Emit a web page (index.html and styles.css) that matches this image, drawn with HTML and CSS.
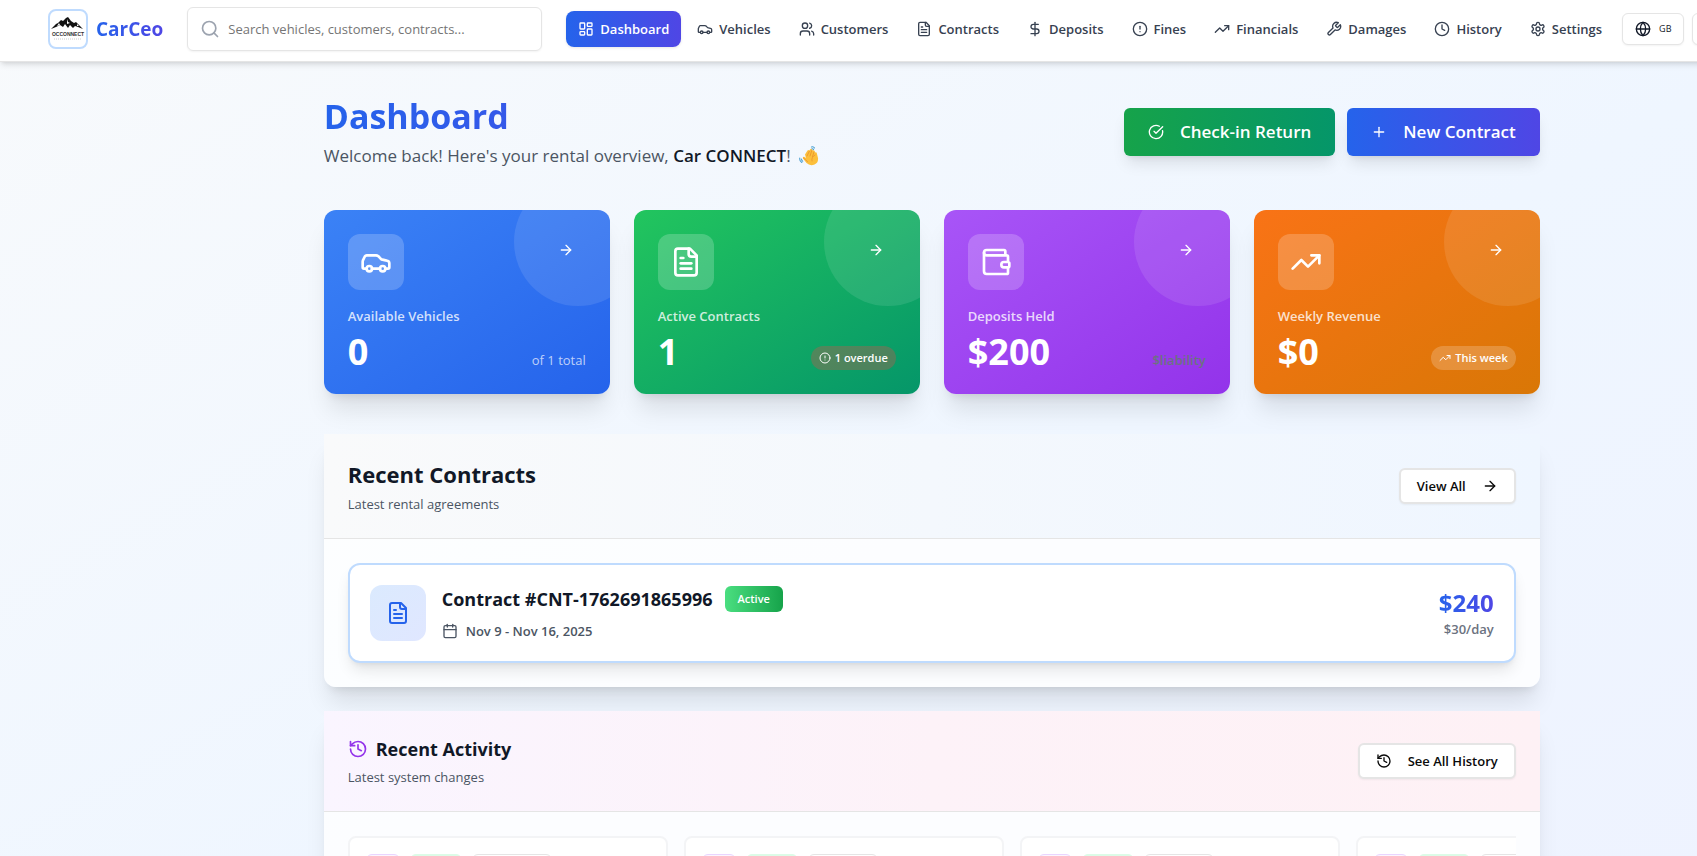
FILE: index.html
```html
<!DOCTYPE html>
<html lang="en">
<head>
  <meta charset="UTF-8" />
  <meta name="viewport" content="width=device-width, initial-scale=1" />
  <title>CarCeo - Dashboard</title>
  <link rel="stylesheet" href="styles.css">
</head>
<body>
  <!-- icon sprite -->
  <svg class="sprite" aria-hidden="true">
    <symbol id="i-search" viewBox="0 0 24 24"><circle cx="11" cy="11" r="8"/><path d="m21 21-4.3-4.3"/></symbol>
    <symbol id="i-dashboard" viewBox="0 0 24 24"><rect x="3" y="3" width="7" height="9" rx="1"/><rect x="14" y="3" width="7" height="5" rx="1"/><rect x="14" y="12" width="7" height="9" rx="1"/><rect x="3" y="16" width="7" height="5" rx="1"/></symbol>
    <symbol id="i-car" viewBox="0 0 24 24"><path d="M19 17h2c.6 0 1-.4 1-1v-3c0-.9-.7-1.7-1.5-1.9C18.700 10.600 16 10 16 10s-1.300-1.400-2.200-2.300c-.5-.4-1.100-.7-1.800-.7H5c-.6 0-1.100.4-1.400.9l-1.400 2.900A3.700 3.700 0 0 0 2 12v4c0 .6.4 1 1 1h2"/><circle cx="7" cy="17" r="2"/><path d="M9 17h6"/><circle cx="17" cy="17" r="2"/></symbol>
    <symbol id="i-users" viewBox="0 0 24 24"><path d="M16 21v-2a4 4 0 0 0-4-4H6a4 4 0 0 0-4 4v2"/><circle cx="9" cy="7" r="4"/><path d="M22 21v-2a4 4 0 0 0-3-3.870"/><path d="M16 3.130a4 4 0 0 1 0 7.750"/></symbol>
    <symbol id="i-file" viewBox="0 0 24 24"><path d="M15 2H6a2 2 0 0 0-2 2v16a2 2 0 0 0 2 2h12a2 2 0 0 0 2-2V7Z"/><path d="M14 2v4a2 2 0 0 0 2 2h4"/><path d="M10 9H8"/><path d="M16 13H8"/><path d="M16 17H8"/></symbol>
    <symbol id="i-dollar" viewBox="0 0 24 24"><path d="M12 2v20"/><path d="M17 5H9.500a3.500 3.500 0 0 0 0 7h5a3.500 3.500 0 0 1 0 7H6"/></symbol>
    <symbol id="i-alert" viewBox="0 0 24 24"><circle cx="12" cy="12" r="10"/><path d="M12 8v4"/><path d="M12 16h.01"/></symbol>
    <symbol id="i-trend" viewBox="0 0 24 24"><path d="m22 7-8.500 8.500-5-5L2 17"/><path d="M16 7h6v6"/></symbol>
    <symbol id="i-wrench" viewBox="0 0 24 24"><path d="M14.700 6.300a1 1 0 0 0 0 1.400l1.600 1.600a1 1 0 0 0 1.400 0l3.770-3.770a6 6 0 0 1-7.940 7.940l-6.910 6.910a2.120 2.120 0 0 1-3-3l6.910-6.910a6 6 0 0 1 7.940-7.940l-3.760 3.760z"/></symbol>
    <symbol id="i-clock" viewBox="0 0 24 24"><circle cx="12" cy="12" r="10"/><path d="M12 6v6l4 2"/></symbol>
    <symbol id="i-settings" viewBox="0 0 24 24"><path d="M12.220 2h-.44a2 2 0 0 0-2 2v.18a2 2 0 0 1-1 1.730l-.43.25a2 2 0 0 1-2 0l-.15-.08a2 2 0 0 0-2.730.73l-.22.38a2 2 0 0 0 .73 2.730l.15.1a2 2 0 0 1 1 1.720v.51a2 2 0 0 1-1 1.740l-.15.09a2 2 0 0 0-.73 2.730l.22.38a2 2 0 0 0 2.730.73l.15-.08a2 2 0 0 1 2 0l.43.25a2 2 0 0 1 1 1.730V20a2 2 0 0 0 2 2h.44a2 2 0 0 0 2-2v-.18a2 2 0 0 1 1-1.730l.43-.25a2 2 0 0 1 2 0l.15.08a2 2 0 0 0 2.730-.73l.22-.39a2 2 0 0 0-.73-2.730l-.15-.08a2 2 0 0 1-1-1.740v-.5a2 2 0 0 1 1-1.740l.15-.09a2 2 0 0 0 .73-2.730l-.22-.38a2 2 0 0 0-2.730-.73l-.15.08a2 2 0 0 1-2 0l-.43-.25a2 2 0 0 1-1-1.730V4a2 2 0 0 0-2-2z"/><circle cx="12" cy="12" r="3"/></symbol>
    <symbol id="i-globe" viewBox="0 0 24 24"><circle cx="12" cy="12" r="10"/><path d="M12 2a14.500 14.500 0 0 0 0 20 14.500 14.500 0 0 0 0-20"/><path d="M2 12h20"/></symbol>
    <symbol id="i-check" viewBox="0 0 24 24"><path d="M21.800 10A10 10 0 1 1 17 3.340"/><path d="m9 11 3 3L22 4"/></symbol>
    <symbol id="i-plus" viewBox="0 0 24 24"><path d="M5 12h14"/><path d="M12 5v14"/></symbol>
    <symbol id="i-arrow" viewBox="0 0 24 24"><path d="M5 12h14"/><path d="m12 5 7 7-7 7"/></symbol>
    <symbol id="i-wallet" viewBox="0 0 24 24"><path d="M19 7V4a1 1 0 0 0-1-1H5a2 2 0 0 0 0 4h15a1 1 0 0 1 1 1v4h-3a2 2 0 0 0 0 4h3a1 1 0 0 0 1-1v-2a1 1 0 0 0-1-1"/><path d="M3 5v14a2 2 0 0 0 2 2h15a1 1 0 0 0 1-1v-4"/></symbol>
    <symbol id="i-calendar" viewBox="0 0 24 24"><path d="M8 2v4"/><path d="M16 2v4"/><rect x="3" y="4" width="18" height="18" rx="2"/><path d="M3 10h18"/></symbol>
    <symbol id="i-history" viewBox="0 0 24 24"><path d="M3 12a9 9 0 1 0 9-9 9.750 9.750 0 0 0-6.740 2.740L3 8"/><path d="M3 3v5h5"/><path d="M12 7v5l4 2"/></symbol>
  </svg>

  <div class="page">
    <header class="topbar">
      <a class="brand" href="#">
        <svg class="brand-logo" viewBox="0 0 36 36" aria-hidden="true">
          <path d="M1 18 6 13l2-1 3-3 2 1 3-3 2-1 3 4 3 2 2-1 4 4 3 3-5-2-3-1-2 2-3-3-2 3-3-4-2 3-3-2-4 2z" fill="#111"/>
          <path d="m17 8 1 3 2 1-3 1zM9 12l1 2-3 1zM27 13l2 2-2 0z" fill="#fff"/>
          <text x="18" y="25" text-anchor="middle" class="logo-name">OCCONNECT</text>
          <path d="M4 28h28" stroke="#ccc" stroke-width="1" stroke-dasharray="1 1"/>
        </svg>
        <span class="brand-name">CarCeo</span>
      </a>

      <label class="search">
        <svg class="icon icon-md"><use href="#i-search"/></svg>
        <input type="text" placeholder="Search vehicles, customers, contracts..." aria-label="Search" />
      </label>

      <nav class="nav">
        <a class="active" href="#"><svg class="icon"><use href="#i-dashboard"/></svg>Dashboard</a>
        <a href="#"><svg class="icon"><use href="#i-car"/></svg>Vehicles</a>
        <a href="#"><svg class="icon"><use href="#i-users"/></svg>Customers</a>
        <a href="#"><svg class="icon"><use href="#i-file"/></svg>Contracts</a>
        <a href="#"><svg class="icon"><use href="#i-dollar"/></svg>Deposits</a>
        <a href="#"><svg class="icon"><use href="#i-alert"/></svg>Fines</a>
        <a href="#"><svg class="icon"><use href="#i-trend"/></svg>Financials</a>
        <a href="#"><svg class="icon"><use href="#i-wrench"/></svg>Damages</a>
        <a href="#"><svg class="icon"><use href="#i-clock"/></svg>History</a>
        <a href="#"><svg class="icon"><use href="#i-settings"/></svg>Settings</a>
      </nav>

      <div class="tools">
        <button class="tool-btn" type="button"><svg class="icon"><use href="#i-globe"/></svg>GB</button>
        <button class="tool-btn account" type="button" aria-label="Account"><svg class="icon"><use href="#i-users"/></svg></button>
      </div>
    </header>

    <main>
      <section class="intro">
        <div>
          <h1>Dashboard</h1>
          <p>Welcome back! Here's your rental overview, <strong>Car CONNECT</strong>!
            <svg class="wave" viewBox="0 0 20 20" role="img" aria-label="waving hand">
              <path d="M6 8.500 8.500 4.500q1.200-1.300 2 .2L11 3.500q1.200-1.500 2.200 0l.4 1q1.400-.9 2 .5l.3 1.500q1.700-.6 2 1L19 12q.5 5-3.500 6.500-4.500 1.800-8-1.500L4 12.500q-.6-1.600 1-1.700L7 12z" fill="#fcbf3b"/>
              <path d="m8 10 2.500-5M11 10l1.800-5.500M13.500 10.500l1.500-4.500M4.500 12l4 3.500M16 9q-4 2-3 6" fill="none" stroke="#e8912d" stroke-width=".8" stroke-linecap="round"/>
              <path d="M12.500 1q2-.8 3 1M13 2.800q1-.3 1.500.8M.8 12q-.5 3 2 4.500M2.500 13q0 1.500 1.200 2.200" fill="none" stroke="#4a9fd0" stroke-width="1.100" stroke-linecap="round"/>
            </svg>
          </p>
        </div>
        <div class="intro-actions">
          <button class="btn-lg green" type="button"><svg class="icon"><use href="#i-check"/></svg>Check-in Return</button>
          <button class="btn-lg blue" type="button"><svg class="icon"><use href="#i-plus"/></svg>New Contract</button>
        </div>
      </section>

      <section class="stats">
        <article class="stat stat-blue">
          <div class="stat-top">
            <span class="stat-icon"><svg class="icon icon-xl"><use href="#i-car"/></svg></span>
            <button class="stat-go" type="button" aria-label="Open vehicles"><svg class="icon"><use href="#i-arrow"/></svg></button>
          </div>
          <p class="stat-label">Available Vehicles</p>
          <div class="stat-row"><span class="stat-value">0</span><span class="stat-note">of 1 total</span></div>
        </article>
        <article class="stat stat-green">
          <div class="stat-top">
            <span class="stat-icon"><svg class="icon icon-xl"><use href="#i-file"/></svg></span>
            <button class="stat-go" type="button" aria-label="Open contracts"><svg class="icon"><use href="#i-arrow"/></svg></button>
          </div>
          <p class="stat-label">Active Contracts</p>
          <div class="stat-row"><span class="stat-value">1</span><span class="pill pill-red"><svg class="icon icon-xs"><use href="#i-alert"/></svg>1 overdue</span></div>
        </article>
        <article class="stat stat-purple">
          <div class="stat-top">
            <span class="stat-icon"><svg class="icon icon-xl"><use href="#i-wallet"/></svg></span>
            <button class="stat-go" type="button" aria-label="Open deposits"><svg class="icon"><use href="#i-arrow"/></svg></button>
          </div>
          <p class="stat-label">Deposits Held</p>
          <div class="stat-row"><span class="stat-value">$200</span><span class="stat-note muted">$liability</span></div>
        </article>
        <article class="stat stat-orange">
          <div class="stat-top">
            <span class="stat-icon"><svg class="icon icon-xl"><use href="#i-trend"/></svg></span>
            <button class="stat-go" type="button" aria-label="Open financials"><svg class="icon"><use href="#i-arrow"/></svg></button>
          </div>
          <p class="stat-label">Weekly Revenue</p>
          <div class="stat-row"><span class="stat-value">$0</span><span class="pill"><svg class="icon icon-xs"><use href="#i-trend"/></svg>This week</span></div>
        </article>
      </section>

      <section class="panel">
        <div class="panel-head">
          <div>
            <h2>Recent Contracts</h2>
            <p>Latest rental agreements</p>
          </div>
          <button class="btn-outline" type="button">View All<svg class="icon"><use href="#i-arrow"/></svg></button>
        </div>
        <div class="panel-body">
          <a class="contract" href="#">
            <span class="contract-icon"><svg class="icon icon-lg"><use href="#i-file"/></svg></span>
            <span class="contract-info">
              <span class="contract-title">Contract #CNT-1762691865996 <span class="badge">Active</span></span>
              <span class="contract-date"><svg class="icon"><use href="#i-calendar"/></svg>Nov 9 - Nov 16, 2025</span>
            </span>
            <span class="contract-price">
              <span class="total">$240</span>
              <span class="rate">$30/day</span>
            </span>
          </a>
        </div>
      </section>

      <section class="panel">
        <div class="panel-head head-pink">
          <div>
            <h3><svg class="icon icon-md"><use href="#i-history"/></svg>Recent Activity</h3>
            <p>Latest system changes</p>
          </div>
          <button class="btn-outline" type="button"><svg class="icon"><use href="#i-history"/></svg>See All History</button>
        </div>
        <div class="panel-body">
          <div class="activity">
            <div class="activity-card"><span class="tag tag-icon"></span><span class="tag tag-action"></span><span class="tag tag-wide"></span></div>
            <div class="activity-card"><span class="tag tag-icon"></span><span class="tag tag-action"></span><span class="tag tag-type"></span></div>
            <div class="activity-card"><span class="tag tag-icon"></span><span class="tag tag-action"></span><span class="tag tag-type"></span></div>
            <div class="activity-card"><span class="tag tag-icon"></span><span class="tag tag-action"></span><span class="tag tag-wide"></span></div>
          </div>
        </div>
      </section>
    </main>
  </div>
</body>
</html>
```
FILE: styles.css
```css
:root {
  --blue: #2563eb;
  --indigo: #4f46e5;
  --ink: #111827;
  --gray: #4b5563;
  --border: #e5e5e5;
  --radius: 12px;
  --accent: linear-gradient(to right, var(--blue), var(--indigo));
}

* {
  box-sizing: border-box;
}

body {
  margin: 0;
  overflow: hidden;
  height: 100vh;
  font-family: "Open Sans", "Noto Sans", sans-serif;
  font-size: 13px;
  line-height: 20px;
  color: var(--ink);
}

h1, h2, h3, p {
  margin: 0;
}

a {
  color: inherit;
  text-decoration: none;
}

button, input {
  font: inherit;
  color: inherit;
}

button {
  cursor: pointer;
}

.sprite {
  display: none;
}

.icon {
  width: 16px;
  height: 16px;
  flex-shrink: 0;
  fill: none;
  stroke: currentColor;
  stroke-width: 2;
  stroke-linecap: round;
  stroke-linejoin: round;
}

.icon-xs { width: 12px; height: 12px; }
.icon-md { width: 20px; height: 20px; }
.icon-lg { width: 24px; height: 24px; }
.icon-xl { width: 32px; height: 32px; }

/* the top bar may be wider than the window, the page grows with it */
.page {
  width: max-content;
  min-width: 100%;
  min-height: 100vh;
  background: linear-gradient(to bottom right, #f8fafc, #eff6ff, #eef2ff);
}

/* top bar */
.topbar {
  display: flex;
  align-items: center;
  padding: 7px 32px 10px 48px;
  background: #fff;
  border-bottom: 1px solid var(--border);
  box-shadow: 0 4px 6px -1px rgba(0,0,0,0.1), 0 2px 4px -2px rgba(0,0,0,0.1);
}

.brand {
  display: flex;
  align-items: center;
  gap: 8px;
  margin-right: 24px;
}

.brand-logo {
  width: 40px;
  height: 40px;
  border: 2px solid #bfdbfe;
  border-radius: 8px;
}

.logo-name {
  font: 700 5px "Liberation Sans", sans-serif;
  fill: #333;
}

.brand-name {
  font-size: 19px;
  line-height: 28px;
  font-weight: 700;
  background: var(--accent);
  background-clip: text;
  color: transparent;
}

.search {
  display: flex;
  align-items: center;
  gap: 8px;
  width: 355px;
  height: 44px;
  padding: 0 12px;
  margin-right: 24px;
  border: 1px solid var(--border);
  border-radius: 6px;
  box-shadow: 0 1px 2px rgba(0,0,0,0.05);
}

.search .icon {
  color: #9ca3af;
}

.search input {
  flex: 1;
  min-width: 0;
  padding: 0;
  border: 0;
  outline: none;
  background: none;
}

.search input::placeholder {
  color: #757575;
}

.nav {
  display: flex;
  gap: 4px;
}

.nav a {
  display: flex;
  align-items: center;
  gap: 6px;
  height: 36px;
  padding: 0 12px;
  border-radius: 8px;
  font-weight: 600;
  color: #374151;
}

.nav .active {
  background: var(--accent);
  color: #fff;
  box-shadow: 0 1px 3px rgba(0,0,0,0.1);
}

.tools {
  display: flex;
  gap: 8px;
  margin-left: 8px;
}

.tool-btn {
  display: flex;
  align-items: center;
  gap: 8px;
  height: 32px;
  padding: 0 12px;
  border: 1px solid var(--border);
  border-radius: 6px;
  background: #fff;
  font-size: 9px;
  font-weight: 500;
  box-shadow: 0 1px 2px rgba(0,0,0,0.05);
}

.account {
  width: 139px;
}

/* content column */
main {
  display: flex;
  flex-direction: column;
  max-width: 1280px;
  margin: 0 auto;
  padding: 32px;
}

.intro {
  display: flex;
  justify-content: space-between;
  align-items: center;
  margin-bottom: 40px;
}

.intro h1 {
  font-size: 34px;
  line-height: 44px;
  font-weight: 700;
  margin-bottom: 4px;
  background: var(--accent);
  background-clip: text;
  color: transparent;
}

.intro p {
  font-size: 17px;
  line-height: 28px;
  color: var(--gray);
}

.intro strong {
  font-weight: 600;
  color: var(--ink);
}

.wave {
  width: 20px;
  height: 20px;
  margin-left: 4px;
  vertical-align: -4px;
}

.intro-actions {
  display: flex;
  gap: 12px;
}

.btn-lg {
  display: flex;
  align-items: center;
  gap: 16px;
  height: 48px;
  padding: 0 24px;
  border: 0;
  border-radius: 6px;
  color: #fff;
  font-size: 17px;
  font-weight: 600;
  box-shadow: 0 10px 15px -3px rgba(0,0,0,0.1), 0 4px 6px -4px rgba(0,0,0,0.1);
}

.green {
  background: linear-gradient(to right, #16a34a, #059669);
}

.blue {
  background: var(--accent);
}

/* stat cards */
.stats {
  display: grid;
  grid-template-columns: repeat(4, 1fr);
  gap: 24px;
  margin-bottom: 40px;
}

.stat {
  position: relative;
  overflow: hidden;
  padding: 24px;
  border-radius: var(--radius);
  color: #fff;
  box-shadow: 0 20px 25px -5px rgba(0,0,0,0.1), 0 8px 10px -6px rgba(0,0,0,0.1);
}

.stat::before {
  content: "";
  position: absolute;
  top: -32px;
  right: -32px;
  width: 128px;
  height: 128px;
  border-radius: 50%;
  background: rgba(255,255,255,0.1);
}

.stat-blue { background: linear-gradient(to bottom right, #3b82f6, #2563eb); }
.stat-green { background: linear-gradient(to bottom right, #22c55e, #059669); }
.stat-purple { background: linear-gradient(to bottom right, #a855f7, #9333ea); }
.stat-orange { background: linear-gradient(to bottom right, #f97316, #d97706); }

.stat-top {
  display: flex;
  justify-content: space-between;
  align-items: flex-start;
  margin-bottom: 16px;
}

.stat-icon {
  display: flex;
  padding: 12px;
  border-radius: var(--radius);
  background: rgba(255,255,255,0.2);
}

.stat-go {
  position: relative;
  display: flex;
  padding: 8px 12px;
  border: 0;
  background: none;
}

.stat-label {
  margin-bottom: 8px;
  font-weight: 600;
  color: rgba(255,255,255,0.8);
}

.stat-row {
  display: flex;
  justify-content: space-between;
  align-items: flex-end;
}

.stat-value {
  font-size: 36px;
  line-height: 36px;
  font-weight: 700;
}

.stat-note {
  color: rgba(255,255,255,0.7);
}

.muted {
  color: #6b7280;
  font-weight: 600;
}

.pill {
  display: flex;
  align-items: center;
  gap: 4px;
  height: 24px;
  padding: 0 8px;
  border-radius: 12px;
  background: rgba(255,255,255,0.2);
  font-size: 11px;
  font-weight: 600;
}

.pill-red {
  background: rgba(239,68,68,0.3);
}

/* panels */
.panel {
  margin-bottom: 24px;
  border-radius: var(--radius);
  background: rgba(255,255,255,0.8);
  box-shadow: 0 20px 25px -5px rgba(0,0,0,0.1), 0 8px 10px -6px rgba(0,0,0,0.1);
}

.panel-head {
  display: flex;
  justify-content: space-between;
  align-items: center;
  padding: 24px;
  border-bottom: 1px solid var(--border);
  background: linear-gradient(to right, #f9fafb, #eff6ff);
}

.head-pink {
  background: linear-gradient(to right, #faf5ff, #fdf2f8, #fef1f5);
}

.panel-head h2 {
  font-size: 22px;
  line-height: 32px;
  font-weight: 700;
  margin-bottom: 4px;
}

.panel-head h3 {
  display: flex;
  align-items: center;
  gap: 8px;
  font-size: 18px;
  line-height: 28px;
  font-weight: 700;
  margin-bottom: 4px;
}

.panel-head h3 .icon {
  color: #9333ea;
}

.panel-head p {
  color: var(--gray);
}

.panel-body {
  padding: 24px;
}

.btn-outline {
  display: flex;
  align-items: center;
  gap: 16px;
  height: 36px;
  padding: 0 16px;
  border: 2px solid var(--border);
  border-radius: 6px;
  background: #fff;
  color: #0a0a0a;
  font-weight: 600;
  box-shadow: 0 1px 2px rgba(0,0,0,0.05);
}

.contract {
  display: flex;
  align-items: center;
  gap: 16px;
  padding: 20px;
  border: 2px solid #bfdbfe;
  border-radius: var(--radius);
  background: #fff;
  box-shadow: 0 10px 15px -3px rgba(0,0,0,0.1), 0 4px 6px -4px rgba(0,0,0,0.1);
}

.contract-icon {
  display: flex;
  padding: 16px;
  border-radius: var(--radius);
  background: linear-gradient(to bottom right, #dbeafe, #e0e7ff);
  color: var(--blue);
}

.contract-info {
  display: flex;
  flex: 1;
  flex-direction: column;
  gap: 8px;
}

.contract-title {
  display: flex;
  align-items: center;
  gap: 12px;
  font-size: 18px;
  line-height: 28px;
  font-weight: 700;
}

.badge {
  padding: 3px 13px;
  border-radius: 6px;
  background: linear-gradient(to right, #4ade80, #16a34a);
  color: #fff;
  font-size: 11px;
  line-height: 20px;
  font-weight: 600;
}

.contract-date {
  display: flex;
  align-items: center;
  gap: 8px;
  color: var(--gray);
  font-weight: 600;
}

.contract-price {
  display: flex;
  flex-direction: column;
  align-items: flex-end;
}

.total {
  font-size: 24px;
  line-height: 32px;
  font-weight: 700;
  background: var(--accent);
  background-clip: text;
  color: transparent;
}

.rate {
  color: #6b7280;
  font-weight: 600;
}

.activity {
  display: grid;
  grid-auto-flow: column;
  grid-auto-columns: 320px;
  gap: 16px;
  overflow: hidden;
}

.activity-card {
  display: flex;
  gap: 10px;
  min-height: 140px;
  padding: 16px;
  border: 2px solid #f3f4f6;
  border-radius: 8px;
  background: #fff;
}

.tag {
  height: 24px;
  border: 1px solid var(--border);
  border-radius: 6px;
}

.tag-icon {
  width: 34px;
  border-color: #e9d5ff;
  background: #faf5ff;
}

.tag-action {
  width: 52px;
  border-color: #dcfce7;
  background: #dcfce7;
}

.tag-type {
  width: 70px;
}

.tag-wide {
  width: 80px;
}
```
